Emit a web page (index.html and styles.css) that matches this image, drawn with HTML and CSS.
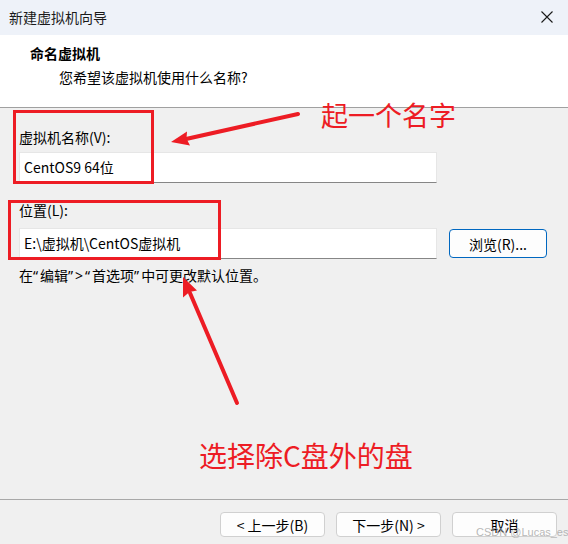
FILE: index.html
```html
<!DOCTYPE html>
<html lang="zh-CN">
<head>
<meta charset="utf-8">
<title>新建虚拟机向导</title>
<link rel="stylesheet" href="styles.css">
</head>
<body>
<div class="window">
  <div class="titlebar">
    <span class="title">新建虚拟机向导</span>
    <svg class="close" width="14" height="14" viewBox="0 0 14 14"><path d="M1.5 1.5 L12.5 12.5 M12.5 1.5 L1.5 12.5" stroke="#1a1a1a" stroke-width="1.1" fill="none"/></svg>
  </div>
  <div class="header">
    <div class="h-title">命名虚拟机</div>
    <div class="h-sub">您希望该虚拟机使用什么名称?</div>
  </div>
  <div class="body">
    <div class="label">虚拟机名称(V):</div>
    <div class="input name-input">CentOS9 64位</div>
    <div class="label loc-label">位置(L):</div>
    <div class="loc-row">
      <div class="input loc-input">E:\虚拟机\CentOS虚拟机</div>
      <div class="btn btn-browse">浏览(R)...</div>
    </div>
    <div class="hint">在<span class="q">“</span>编辑<span class="q">”&gt;“</span>首选项<span class="q">”</span>中可更改默认位置。</div>
  </div>
  <div class="footer">
    <div class="btn">&lt; 上一步(B)</div>
    <div class="btn">下一步(N) &gt;</div>
    <div class="btn">取消</div>
  </div>

  <div class="redbox box1"></div>
  <div class="redbox box2"></div>
  <div class="note note1">起一个名字</div>
  <div class="note note2">选择除C盘外的盘</div>
  <svg class="arrows" width="568" height="544" viewBox="0 0 568 544">
    <g stroke="#ed1c24" stroke-width="4" stroke-linecap="round" fill="none">
      <line x1="298" y1="114" x2="186" y2="139"/>
      <line x1="237" y1="403" x2="190" y2="293"/>
    </g>
    <g fill="#ed1c24">
      <polygon points="171,142 190,145.5 186.5,138.8 187,131.5"/>
      <polygon points="183,277 183,297.5 189.5,292 197,290.5"/>
    </g>
  </svg>
  <div class="watermark">CSDN @Lucas_es</div>
</div>
</body>
</html>
```

FILE: styles.css
```css
* { box-sizing: border-box; }
html, body { margin: 0; padding: 0; }
body {
  width: 568px;
  height: 544px;
  overflow: hidden;
  font-family: "Noto Sans CJK SC", "Noto Sans", sans-serif;
  font-size: 14px;
  color: #1a1a1a;
  background: #f0f0f0;
}
.window {
  position: relative;
  width: 568px;
  height: 544px;
  display: flex;
  flex-direction: column;
  background: #f0f0f0;
}
.titlebar {
  height: 35px;
  background: #eef2f9;
  display: flex;
  align-items: center;
  justify-content: space-between;
  padding: 0 14px 2px 9px;
}
.title { font-size: 14px; line-height: 20px; color: #1a1a1a; }
.close { display: block; }
.header {
  height: 73px;
  background: #ffffff;
  border-bottom: 1px solid #a0a0a0;
  padding: 8px 0 0 30px;
}
.h-title { font-weight: bold; font-size: 14px; line-height: 20px; color: #000; }
.h-sub { font-size: 14px; line-height: 20px; margin: 4px 0 0 29px; color: #000; }
.body {
  flex: 1;
  padding: 19px 0 0 19px;
  display: flex;
  flex-direction: column;
}
.label { line-height: 20px; color: #000; }
.input {
  height: 31px;
  width: 418px;
  background: #fff;
  border: 1px solid #e6e6e6;
  border-bottom: 1px solid #868686;
  padding: 0 0 0 4px;
  line-height: 28px;
  color: #000;
}
.name-input { margin-top: 5px; }
.loc-label { margin-top: 17px; }
.loc-row {
  margin-top: 8px;
  display: flex;
  align-items: center;
  gap: 12px;
}
.hint { margin-top: 6px; line-height: 20px; color: #000; }
.q { font-family: "Noto Sans", "DejaVu Sans", sans-serif; letter-spacing: 2px; }
.btn {
  width: 105px;
  height: 25px;
  background: #fdfdfd;
  border: 1px solid #d0d0d0;
  border-radius: 4px;
  display: flex;
  align-items: center;
  justify-content: center;
  font-size: 14px;
  color: #000;
}
.btn-browse {
  width: 98px;
  height: 29px;
  border: 1.5px solid #0067c0;
}
.footer {
  height: 45px;
  border-top: 1px solid #a8a8a8;
  display: flex;
  justify-content: flex-end;
  gap: 11px;
  padding: 12px 11px 0 0;
}
.redbox {
  position: absolute;
  border: 3px solid #ed1c24;
}
.box1 { left: 13px; top: 110px; width: 141px; height: 74px; }
.box2 { left: 8px; top: 200px; width: 213px; height: 60px; }
.note {
  position: absolute;
  color: #ed1c24;
  font-size: 27px;
  line-height: 34px;
  white-space: nowrap;
}
.note1 { left: 321px; top: 98px; }
.note2 { left: 199px; top: 438px; font-size: 28px; }
.arrows { position: absolute; left: 0; top: 0; pointer-events: none; }
.watermark {
  position: absolute;
  left: 476px;
  top: 525px;
  font-size: 11px;
  line-height: 14px;
  white-space: nowrap;
  color: rgba(160,160,160,0.75);
  font-family: "Liberation Sans", sans-serif;
}
```
